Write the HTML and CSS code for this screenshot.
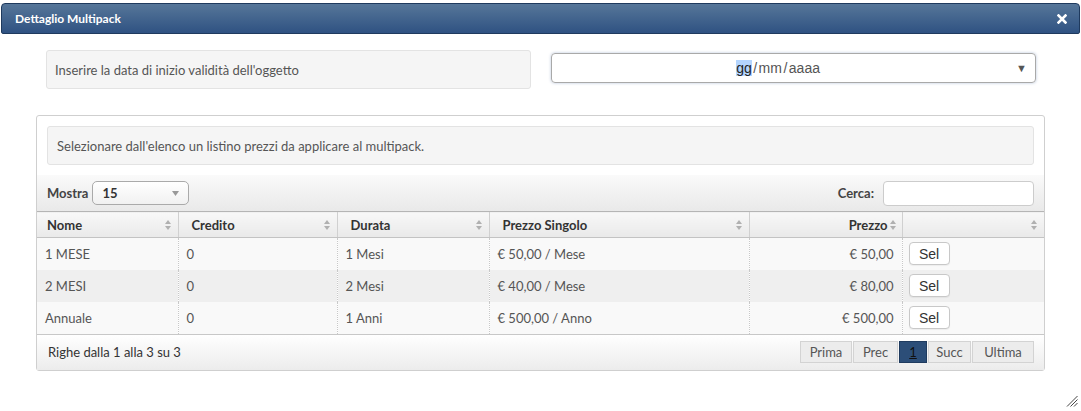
FILE: index.html
```html
<!DOCTYPE html>
<html lang="it">
<head>
<meta charset="utf-8">
<title>Dettaglio Multipack</title>
<link rel="stylesheet" href="styles.css">
</head>
<body>
<div class="dialog">
  <div class="titlebar">
    <span class="title">Dettaglio Multipack</span>
    <span class="close">
      <svg width="10" height="10" viewBox="0 0 10 10"><path d="M1.5 1.5 L8.5 8.5 M8.5 1.5 L1.5 8.5" stroke="#fff" stroke-width="2.6" stroke-linecap="square"/></svg>
    </span>
  </div>
  <div class="content">
    <div class="daterow">
      <div class="col"><div class="well">Inserire la data di inizio validità dell'oggetto</div></div>
      <div class="col right">
        <div class="dateinput"><span class="datetext"><span class="sel">gg</span><span class="sep">/</span>mm<span class="sep">/</span>aaaa</span><span class="caret">▼</span></div>
      </div>
    </div>
    <div class="panel">
      <div class="well inner">Selezionare dall'elenco un listino prezzi da applicare al multipack.</div>
      <div class="toolbar">
        <div class="length"><span class="lbl">Mostra</span><span class="select"><span>15</span><svg width="7" height="5" viewBox="0 0 7 5"><path d="M0 0 H7 L3.5 5 Z" fill="#999"/></svg></span></div>
        <div class="search"><span class="lbl">Cerca:</span><span class="searchbox"></span></div>
      </div>
      <table class="grid">
        <colgroup><col class="c1"><col class="c2"><col class="c3"><col class="c4"><col class="c5"><col class="c6"></colgroup>
        <thead>
          <tr>
            <th class="first"><span>Nome</span><i class="sort"></i></th>
            <th><span>Credito</span><i class="sort"></i></th>
            <th><span>Durata</span><i class="sort"></i></th>
            <th><span>Prezzo Singolo</span><i class="sort"></i></th>
            <th class="right"><span>Prezzo</span><i class="sort"></i></th>
            <th><span></span><i class="sort"></i></th>
          </tr>
        </thead>
        <tbody>
          <tr class="odd"><td>1 MESE</td><td>0</td><td>1 Mesi</td><td>€ 50,00 / Mese</td><td class="num">€ 50,00</td><td class="act"><span class="btn">Sel</span></td></tr>
          <tr class="even"><td>2 MESI</td><td>0</td><td>2 Mesi</td><td>€ 40,00 / Mese</td><td class="num">€ 80,00</td><td class="act"><span class="btn">Sel</span></td></tr>
          <tr class="odd"><td>Annuale</td><td>0</td><td>1 Anni</td><td>€ 500,00 / Anno</td><td class="num">€ 500,00</td><td class="act"><span class="btn">Sel</span></td></tr>
        </tbody>
      </table>
      <div class="footer">
        <span class="info">Righe dalla 1 alla 3 su 3</span>
        <div class="pager">
          <span class="pg w52">Prima</span><span class="pg w45">Prec</span><span class="pg cur">1</span><span class="pg w43">Succ</span><span class="pg w62">Ultima</span>
        </div>
      </div>
    </div>
  </div>
  <svg class="grip" width="12" height="12" viewBox="0 0 12 12"><path d="M11.5 1 L1 11.5 M11.5 4.5 L4.5 11.5 M11.5 8 L8 11.5" stroke="#444" stroke-width="1"/></svg>
</div>
</body>
</html>
```
FILE: styles.css
```css
html, body { margin: 0; padding: 0; background: #fff; }
body { font-family: "Lato", "Open Sans", sans-serif; font-size: 13px; color: #555; }
.dialog { position: relative; height: 411px; padding: 3px 1px 0 1px; box-sizing: border-box; overflow: hidden; }
.titlebar {
  height: 31px; box-sizing: border-box;
  border: 1px solid #1f3a5e; border-radius: 4px 4px 2px 2px;
  background: linear-gradient(#567699, #2f5282);
  display: flex; align-items: center; justify-content: space-between;
  padding: 0 10px 0 13px;
}
.title { color: #fff; font-weight: bold; font-size: 12px; }
.close { display: flex; width: 14px; justify-content: center; }
.content { padding: 16px 35px 0 35px; }
.daterow { display: flex; align-items: center; }
.col { flex: 1; padding: 0 10px; }
.col.right { padding-right: 9px; }
.well {
  background: #f5f5f5; border: 1px solid #e3e3e3; border-radius: 3px;
  height: 39px; box-sizing: border-box; display: flex; align-items: center; padding: 0 8px;
}
.dateinput {
  height: 30px; box-sizing: border-box; border: 1px solid #a9a9a9; border-radius: 4px;
  box-shadow: 0 0 3px rgba(90,120,170,0.45);
  display: flex; align-items: center;
  font-family: "Liberation Sans", Arial, sans-serif; color: #555; font-size: 14px;
  margin-bottom: 3px;
}
.datetext { flex: 1; text-align: center; padding-right: 12px; }
.datetext .sel { background: #b4d5fe; color: #222; }
.datetext .sep { margin: 0 1.5px; }
.caret { font-size: 11px; color: #555; padding-right: 8px; }
.panel {
  margin-top: 26px; border: 1px solid #cfcfcf; border-radius: 3px; height: 256px; box-sizing: border-box;
  padding-top: 10px;
}
.inner { margin: 0 10px; padding: 0 9px; }
.toolbar {
  margin-top: 10px; height: 36px; box-sizing: border-box;
  background: linear-gradient(#fafafa, #e9e9e9);
  display: flex; align-items: center; justify-content: space-between; padding: 0 10px 0 10px;
}
.lbl { font-weight: bold; color: #444; }
.length, .search { display: flex; align-items: center; }
.select {
  margin-left: 4px; width: 97px; height: 24px; box-sizing: border-box;
  border: 1px solid #aaa; border-radius: 5px; background: linear-gradient(#fff, #f1f1f1);
  display: flex; align-items: center; justify-content: space-between; padding: 0 9px 0 9px;
  font-weight: bold; color: #333;
}
.searchbox {
  margin-left: 9px; width: 151px; height: 25px; box-sizing: border-box;
  border: 1px solid #ccc; border-radius: 4px; background: #fff;
}
.grid { width: 100%; border-collapse: collapse; table-layout: fixed; }
.c1 { width: 141px; } .c2 { width: 159px; } .c3 { width: 152px; } .c4 { width: 260px; } .c5 { width: 153px; } .c6 { width: auto; }
.grid th {
  height: 26px; box-sizing: border-box; padding: 0 8px 0 13px; text-align: left; font-weight: bold; color: #333;
  background: linear-gradient(#f8f8f8, #e9e9e9);
  border-top: 1px solid #b5b5b5; border-bottom: 1px solid #c3c3c3; border-left: 1px solid #d0d0d0;
  position: relative; white-space: nowrap; overflow: hidden;
}
.grid th.first { border-left: none; padding-left: 10px; }
.grid th.right { text-align: right; padding-right: 14px; }
.grid th .sort { position: absolute; right: 6px; top: 8px; width: 7px; height: 10px; }
.grid th .sort::before, .grid th .sort::after {
  content: ""; position: absolute; left: 0; width: 0; height: 0;
  border-left: 3.5px solid transparent; border-right: 3.5px solid transparent;
}
.grid th .sort::before { top: 0; border-bottom: 4px solid #b0b0b0; }
.grid th .sort::after { bottom: 0; border-top: 4px solid #b0b0b0; }
.grid th.right .sort { right: 5px; }
.grid td {
  height: 32px; box-sizing: border-box; padding: 0 8px; border-left: 1px dotted #c8c8c8; white-space: nowrap; overflow: hidden;
}
.grid td:first-child { border-left: none; }
.grid tr.odd td { background: #f9f9f9; }
.grid tr.even td { background: #efefef; }
.grid td.num { text-align: right; }
.grid td.act { padding-left: 6px; }
.btn {
  display: inline-flex; align-items: center; justify-content: center;
  width: 41px; height: 23px; box-sizing: border-box;
  border: 1px solid #c8c8c8; border-radius: 4px; background: #fff;
  font-family: "Liberation Sans", Arial, sans-serif; font-size: 14px; color: #333;
  box-shadow: 0 1px 1px rgba(0,0,0,0.05);
}
.footer {
  height: 36px; border-top: 1px solid #c8c8c8; box-sizing: border-box;
  background: linear-gradient(#fff, #ececec);
  display: flex; align-items: center; justify-content: space-between; padding: 0 10px 0 11px;
  color: #333;
}
.pager { display: flex; }
.pg {
  height: 22px; box-sizing: border-box; display: flex; align-items: center; justify-content: center;
  background: #ececec; border: 1px solid #d3d3d3; margin-left: 1px; color: #555;
}
.pg:first-child { margin-left: 0; }
.w52 { width: 52px; } .w45 { width: 45px; } .w43 { width: 43px; } .w62 { width: 62px; }
.pg.cur { width: 28px; background: #2c4e78; border-color: #1f3b5f; color: #111; text-decoration: underline; }
.grip { position: absolute; right: 3px; bottom: 4px; }
```
